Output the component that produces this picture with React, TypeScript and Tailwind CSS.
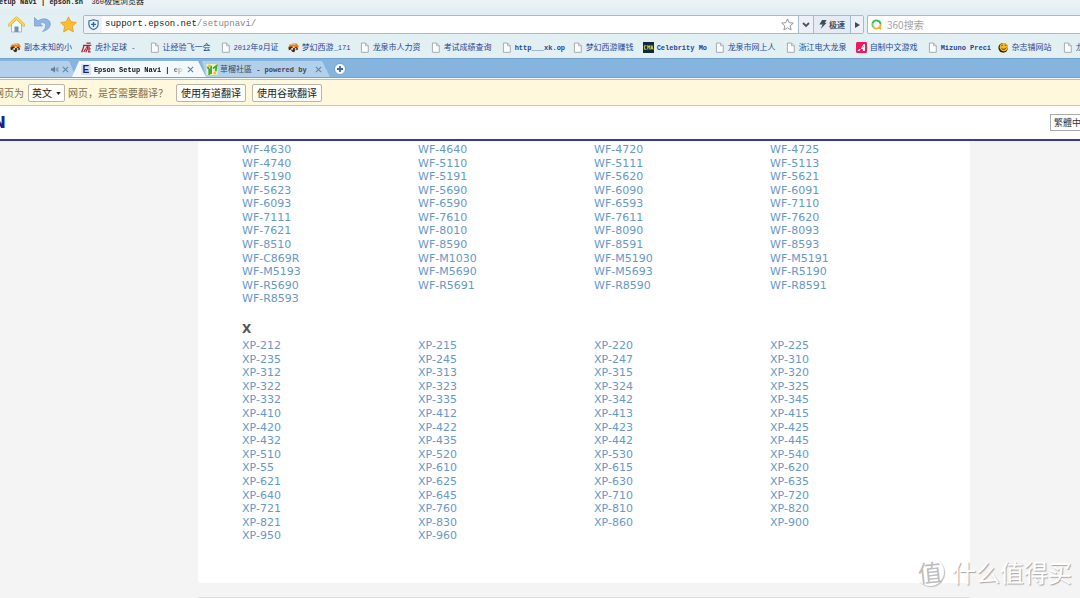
import React from "react";

const WF_MODELS = [
  "WF-4630", "WF-4640", "WF-4720", "WF-4725",
  "WF-4740", "WF-5110", "WF-5111", "WF-5113",
  "WF-5190", "WF-5191", "WF-5620", "WF-5621",
  "WF-5623", "WF-5690", "WF-6090", "WF-6091",
  "WF-6093", "WF-6590", "WF-6593", "WF-7110",
  "WF-7111", "WF-7610", "WF-7611", "WF-7620",
  "WF-7621", "WF-8010", "WF-8090", "WF-8093",
  "WF-8510", "WF-8590", "WF-8591", "WF-8593",
  "WF-C869R", "WF-M1030", "WF-M5190", "WF-M5191",
  "WF-M5193", "WF-M5690", "WF-M5693", "WF-R5190",
  "WF-R5690", "WF-R5691", "WF-R8590", "WF-R8591",
  "WF-R8593",
];

const XP_MODELS = [
  "XP-212", "XP-215", "XP-220", "XP-225",
  "XP-235", "XP-245", "XP-247", "XP-310",
  "XP-312", "XP-313", "XP-315", "XP-320",
  "XP-322", "XP-323", "XP-324", "XP-325",
  "XP-332", "XP-335", "XP-342", "XP-345",
  "XP-410", "XP-412", "XP-413", "XP-415",
  "XP-420", "XP-422", "XP-423", "XP-425",
  "XP-432", "XP-435", "XP-442", "XP-445",
  "XP-510", "XP-520", "XP-530", "XP-540",
  "XP-55", "XP-610", "XP-615", "XP-620",
  "XP-621", "XP-625", "XP-630", "XP-635",
  "XP-640", "XP-645", "XP-710", "XP-720",
  "XP-721", "XP-760", "XP-810", "XP-820",
  "XP-821", "XP-830", "XP-860", "XP-900",
  "XP-950", "XP-960",
];

type IconName = "page" | "game" | "hupu" | "cma" | "pink" | "face";

const BOOKMARKS: { icon: IconName; label: string; short?: boolean }[] = [
  { icon: "game", label: "副本未知的小" },
  { icon: "hupu", label: "虎扑足球 - ", short: true },
  { icon: "page", label: "让经验飞一会" },
  { icon: "page", label: "2012年9月证", short: true },
  { icon: "game", label: "梦幻西游_171" },
  { icon: "page", label: "龙泉市人力资" },
  { icon: "page", label: "考试成绩查询" },
  { icon: "page", label: "http___xk.op" },
  { icon: "page", label: "梦幻西游赚钱" },
  { icon: "cma", label: "Celebrity Mo" },
  { icon: "page", label: "龙泉市网上人" },
  { icon: "page", label: "浙江电大龙泉" },
  { icon: "pink", label: "自制中文游戏" },
  { icon: "page", label: "Mizuno Preci" },
  { icon: "face", label: "杂志铺网站" },
  { icon: "page", label: "龙泉" },
];

// Latin runs are set in a half-width mono face next to full-width Chinese
function Mixed({ text }: { text: string }) {
  return (
    <>
      {text.split(/([\x20-\x7e]+)/).filter(Boolean).map((part, i) =>
        /^[\x20-\x7e]/.test(part) ? (
          <span
            key={i}
            className={`font-['Liberation_Mono',monospace] text-[7px] ${/[a-z]/i.test(part) ? "font-bold" : "font-normal"}`}
          >
            {part}
          </span>
        ) : (
          <span key={i}>{part}</span>
        )
      )}
    </>
  );
}

function Favicon({ name }: { name: IconName }) {
  return (
    <svg viewBox="0 0 16 16" className="h-[11px] w-[11px] shrink-0" aria-hidden="true">
      {name === "page" && (
        <>
          <path d="M3.500 1.500h6l4 4v9.500h-10z" fill="#fbfcfc" stroke="#a3a9ac" strokeWidth="1.400" />
          <path d="M9.500 1.500v4h4" fill="none" stroke="#a3a9ac" strokeWidth="1.200" />
        </>
      )}
      {name === "game" && (
        <>
          <path d="M0 9 2 4l5-2 6 0 3 5-3 2-5-3-4 4z" fill="#e58122" />
          <path d="M4 4l4-1 3 1" stroke="#ffd08a" strokeWidth="1.200" fill="none" />
          <path d="M1 8l4-2 3 3 4-2 3 3-2 2-2-1-2 4-3-1-2-3-3 1z" fill="#3c2a20" />
          <circle cx="6" cy="10" r="1.500" fill="#f3d9bb" />
          <circle cx="11" cy="10" r="1.300" fill="#f3d9bb" />
        </>
      )}
      {name === "hupu" && (
        <g fill="none" stroke="#b3202c" strokeWidth="1.800">
          <path d="M8 1.500h6M3 5h12M4.500 5 1 15M7 7.500h6M7 9.500l-3 5M10 5l-1 5h5M9 11l-2 4M12 11l-1 3.500h3" />
        </g>
      )}
      {name === "cma" && (
        <>
          <rect width="16" height="16" fill="#10283c" />
          <path d="M5 5.500H2v5h3M7 11V5l1.500 3L10 5v6M11.500 11l1.500-6 1.500 6M12 9.500h2" fill="none" stroke="#e8e337" strokeWidth="1.300" />
        </>
      )}
      {name === "pink" && (
        <>
          <rect width="16" height="16" rx="2" fill="#ec1a5d" />
          <path d="M2 13l3-3h2l4-7h2v10h-3v-3H7l-2 3z" fill="#fff" />
          <path d="M9 8l2-3v3z" fill="#ec1a5d" />
        </>
      )}
      {name === "face" && (
        <>
          <circle cx="7.500" cy="8.500" r="7" fill="#33291a" />
          <circle cx="8.500" cy="7.500" r="6" fill="#f4bd22" />
          <path d="M5 5.500l2-1M10 4.500l2 .5M5 9q4 4 7-1" stroke="#33291a" strokeWidth="1.200" fill="none" />
        </>
      )}
    </svg>
  );
}

function CloseIcon() {
  return (
    <svg viewBox="0 0 8 8" className="h-[7px] w-[7px]" aria-hidden="true">
      <path d="M1 1l6 6M7 1 1 7" stroke="#6489a8" strokeWidth="1.400" />
    </svg>
  );
}

function AddressRow() {
  return (
    <div className="flex h-[19px] items-center">
      <div className="flex w-[83px] shrink-0 items-center gap-[9px] pl-2">
        <button type="button" aria-label="主页">
          <svg viewBox="0 0 17 17" className="h-[17px] w-[17px]">
            <path d="M3.500 8v8h10V8l-5-4.500z" fill="#f2f7fa" stroke="#a5bac9" />
            <path d="M6.500 10.500h4V16h-4z" fill="#6f93ad" />
            <path d="M1.200 9 8.500 2l7.300 7" fill="none" stroke="#d9a629" strokeWidth="3" strokeLinecap="round" strokeLinejoin="round" />
            <path d="M1.200 9 8.500 2l7.300 7" fill="none" stroke="#fbd95d" strokeWidth="1.800" strokeLinecap="round" strokeLinejoin="round" />
          </svg>
        </button>
        <button type="button" aria-label="恢复">
          <svg viewBox="0 0 17 17" className="h-[17px] w-[17px]">
            <path d="M0.500 1.500v8.500h8L6 7.500c3-2 6.500-.5 5.500 3.500-.3 1.500-1.500 3-3 4.500 4-1 7.500-3 7.800-7.500C16.500 3 9 1 4 5z" fill="#91b4e2" stroke="#7299ce" strokeWidth=".7" />
          </svg>
        </button>
        <button type="button" aria-label="收藏">
          <svg viewBox="0 0 17 17" className="h-[17px] w-[17px]">
            <path d="M8.500.8l2.400 5 5.500.7-4 3.800 1 5.600-4.900-2.700-4.900 2.700 1-5.600-4-3.800 5.500-.7z" fill="#fbbd31" stroke="#e69b22" strokeWidth=".8" strokeLinejoin="round" />
          </svg>
        </button>
      </div>
      <div className="flex h-[19px] min-w-0 flex-1 items-stretch rounded-[2px] border border-[#9fbdd2] bg-white">
        <div className="flex w-[18px] shrink-0 items-center justify-center bg-[#edf3f9]">
          <svg viewBox="0 0 12 12" className="h-[11px] w-[11px]">
            <path d="M6 .8 11 2v4c0 3-2 4.500-5 5.500C3 10.500 1 9 1 6V2z" fill="#eaf4fc" stroke="#2b669d" strokeWidth="1.200" />
            <path d="M6 3.200v5.400M3.300 5.900h5.400" stroke="#2b669d" strokeWidth="1.500" />
          </svg>
        </div>
        <div className="flex min-w-0 flex-1 items-center pl-[3px] font-['Liberation_Mono',monospace] text-[9px] whitespace-nowrap text-[#222]">
          <span>support.epson.net</span>
          <span className="text-[#888]">/setupnavi/</span>
        </div>
        <button type="button" aria-label="添加收藏" className="flex w-[21px] items-center justify-center">
          <svg viewBox="0 0 14 14" className="h-[13px] w-[13px]">
            <path d="M7 1l1.800 4 4.400.5-3.300 3 1 4.400L7 10.600l-3.900 2.300 1-4.400-3.300-3L5.200 5z" fill="#fff" stroke="#8b8f94" />
          </svg>
        </button>
        <button type="button" aria-label="历史" className="flex w-[15px] items-center justify-center border-l border-[#9fbdd2] bg-[#edf1f7]">
          <svg viewBox="0 0 8 6" className="h-[6px] w-2"><path d="M1 1l3 3 3-3" fill="none" stroke="#495464" strokeWidth="1.800" /></svg>
        </button>
        <button type="button" className="flex w-[37px] items-center justify-center gap-[2px] border-l border-[#9fbdd2] bg-[#e5eaf3] text-[8px] font-bold text-[#45505f]">
          <svg viewBox="0 0 8 10" className="h-[9px] w-[8px]"><path d="M3 0h5L6 3h2L1.500 10 3.500 5H0z" fill="#414c5b" /></svg>
          极速
        </button>
        <button type="button" aria-label="切换" className="flex w-[13px] items-center justify-center border-l border-[#9fbdd2] bg-[#edf1f7]">
          <svg viewBox="0 0 6 6" className="h-[6px] w-[6px]"><path d="M1 0l5 3-5 3z" fill="#414c5b" /></svg>
        </button>
      </div>
      <div className="ml-[3px] flex h-[19px] w-[213px] shrink-0 items-center rounded-l-[2px] border border-r-0 border-[#9fbdd2] bg-white">
        <svg viewBox="0 0 12 12" className="ml-[3px] h-[11px] w-[11px] shrink-0" aria-hidden="true">
          <path d="M10.500 6A4.500 4.500 0 0 0 1.800 4.500" fill="none" stroke="#31b85d" strokeWidth="2" />
          <path d="M1.800 4.500A4.500 4.500 0 0 0 3 9.300" fill="none" stroke="#7bc65b" strokeWidth="2" />
          <path d="M3 9.300A4.500 4.500 0 0 0 10.500 6M9 9.500l2 1.500" fill="none" stroke="#f6ad26" strokeWidth="2" />
        </svg>
        <input type="text" aria-label="搜索" placeholder="360搜索" className="ml-[5px] w-0 min-w-0 flex-1 text-[10px] leading-[14px] outline-none placeholder:text-[#a3a3a3]" />
      </div>
    </div>
  );
}

function TabStrip() {
  return (
    <div className="border-b border-[#b5bfc8] bg-[#f4f9fd] pb-px">
      <div className="flex h-[20px] items-end overflow-hidden border-t border-b border-t-[#6fa1ca] border-b-[#72a3cc] bg-[#85b4df] text-[8px] text-[#3b4754]">
        <div className="flex h-4 w-[76px] shrink-0 items-center justify-end gap-[3px] bg-[#b3d0eb] pr-[7px] [clip-path:polygon(0_0,calc(100%-7px)_0,100%_100%,0_100%)]">
          <svg viewBox="0 0 10 8" className="h-[7px] w-[8px]" aria-hidden="true">
            <path d="M0 2.500h2L5 0v8L2 5.500H0z" fill="#668099" />
            <path d="M6.500 2v4M8.500 1v6" stroke="#668099" />
          </svg>
          <button type="button" aria-label="关闭标签"><CloseIcon /></button>
        </div>
        <div className="z-10 -ml-1 flex h-4 w-[134px] shrink-0 items-center bg-[#f4f9fd] pr-3 pl-[9px] text-[#111] [clip-path:polygon(7px_0,calc(100%-8px)_0,100%_100%,0_100%)]">
          <span className="flex h-[11px] w-[10px] items-center justify-center bg-[#dde1ee] font-['Liberation_Sans',sans-serif] text-[10px] font-bold text-[#17218b]">E</span>
          <span className="ml-[3px] w-[91px] overflow-hidden whitespace-pre [mask-image:linear-gradient(to_right,#000_84%,transparent)]"><Mixed text="Epson Setup Navi | eps" /></span>
          <button type="button" aria-label="关闭标签" className="ml-[3px]"><CloseIcon /></button>
        </div>
        <div className="-ml-1 flex h-4 w-[128px] shrink-0 items-center bg-[#b3d0eb] pl-[4px] [clip-path:polygon(0_0,calc(100%-8px)_0,100%_100%,4px_100%)]">
          <svg viewBox="0 0 12 12" className="h-[11px] w-[12px] shrink-0" aria-hidden="true">
            <rect width="12" height="12" fill="#e8f3cf" />
            <path d="M1 3l2 3v6M5 2v9M7 5l4-3-1 6" fill="none" stroke="#4fa82a" strokeWidth="2" />
            <circle cx="3" cy="2" r="1.500" fill="#f2c51c" />
            <circle cx="9" cy="10" r="1.500" fill="#f2c51c" />
          </svg>
          <span className="ml-[2px] w-[91px] overflow-hidden whitespace-pre"><Mixed text="草榴社區 - powered by" /></span>
          <button type="button" aria-label="关闭标签" className="ml-1"><CloseIcon /></button>
        </div>
        <button type="button" aria-label="新标签" className="mb-[2px] ml-1">
          <svg viewBox="0 0 12 12" className="h-[12px] w-[12px]">
            <circle cx="6" cy="6" r="5.500" fill="#f5f9fc" stroke="#6d94b8" strokeWidth=".8" />
            <path d="M6 3v6M3 6h6" stroke="#44698d" strokeWidth="1.800" />
          </svg>
        </button>
      </div>
    </div>
  );
}

function TranslateBar() {
  const button = "h-[18px] rounded-[2px] border border-[#b9b6a8] bg-[#fdfdfa] text-[10px] text-[#222]";
  return (
    <div className="flex h-[26px] items-center border-b border-[#c8c6bb] bg-[#fff8dc] text-[10px] whitespace-nowrap text-[#7b704f]">
      <span className="flex w-6 justify-end overflow-hidden">网页为</span>
      <div className="relative ml-1 text-[#222]">
        <select aria-label="语言" className={`${button} w-[37px] appearance-none pl-[3px]`}>
          <option>英文</option>
        </select>
        <svg viewBox="0 0 6 4" className="pointer-events-none absolute top-[8px] right-1 h-[3px] w-[5px]"><path d="M0 0h6L3 4z" fill="#222" /></svg>
      </div>
      <span className="ml-[3px] w-[100px]">网页，是否需要翻译？</span>
      <button type="button" className={`${button} ml-2 w-[70px]`}>使用有道翻译</button>
      <button type="button" className={`${button} ml-[6px] w-[70px]`}>使用谷歌翻译</button>
    </div>
  );
}

function ModelList({ models, height }: { models: string[]; height: string }) {
  return (
    <ul className={`grid auto-rows-fr grid-cols-4 text-[11px] leading-[14px] text-[#6698c8] ${height}`}>
      {models.map((model) => (
        <li key={model} className="min-h-0">
          <a href="#" className="block">{model}</a>
        </li>
      ))}
    </ul>
  );
}

export default function App() {
  return (
    <div className="relative min-h-screen overflow-hidden bg-[#f4f4f4] font-['Noto_Sans_CJK_SC',sans-serif]">
      <header className="bg-[#e2eff3]">
        <div className="flex h-[15px] items-start overflow-hidden bg-linear-to-b from-[#edf4f7] to-[#dfecf2]">
          <p className="-mt-1 -ml-px text-[8px] leading-[10px] whitespace-pre text-[#222]">
            <Mixed text="etup Navi | epson.sn  " />
            <Mixed text="360极速浏览器" />
          </p>
        </div>
        <AddressRow />
        <nav className="flex h-[24px] items-center gap-[9px] overflow-hidden pt-[2px] pl-[10px] text-[8px] whitespace-pre text-[#26479a]">
          {BOOKMARKS.map((b) => (
            <a key={b.label} href="#" className="flex shrink-0 items-center gap-[3px]">
              <Favicon name={b.icon} />
              <span className={b.short ? "" : b.icon === "face" ? "w-[41px]" : "w-[48px]"}><Mixed text={b.label} /></span>
            </a>
          ))}
        </nav>
        <TabStrip />
      </header>
      <TranslateBar />

      <div className="flex h-[35px] items-center justify-between overflow-hidden border-b-2 border-[#323b96] bg-white">
        <span className="flex w-[6px] justify-end overflow-hidden font-['DejaVu_Sans',sans-serif] text-[16px] font-bold text-[#17218b]">N</span>
        <select aria-label="語言" className="-mr-[30px] h-[17px] w-[60px] shrink-0 appearance-none border border-[#aaa] bg-white pl-[3px] font-['Noto_Sans_CJK_TC',sans-serif] text-[9px] text-[#333]">
          <option>繁體中文</option>
        </select>
      </div>

      <main className="pr-[110px] pl-[198px] font-['DejaVu_Sans',sans-serif]">
        <section className="rounded-b-[4px] bg-white pt-[2px] pr-6 pb-10 pl-[44px]">
          <ModelList models={WF_MODELS} height="h-[163px]" />
          <h2 className="mt-[14px] mb-px text-[12px] leading-[18px] font-bold text-[#555]">X</h2>
          <ModelList models={XP_MODELS} height="h-[204px]" />
        </section>
        <hr className="mt-[14px] border-t border-[#e0e0e0]" />
      </main>

      {/* watermark */}
      <div className="pointer-events-none absolute right-[8px] bottom-[12px] flex items-center gap-2">
        <span className="flex h-7 w-7 items-center justify-center rounded-full bg-white shadow-[1px_1px_1px_#bdbdbd]">
          <span className="-rotate-6 text-[24px] leading-[28px] text-[#bdbdbd]">值</span>
        </span>
        <span className="text-[24px] leading-[28px] whitespace-nowrap text-white [text-shadow:1px_1px_1px_#a5a5a5]">什么值得买</span>
      </div>
    </div>
  );
}
